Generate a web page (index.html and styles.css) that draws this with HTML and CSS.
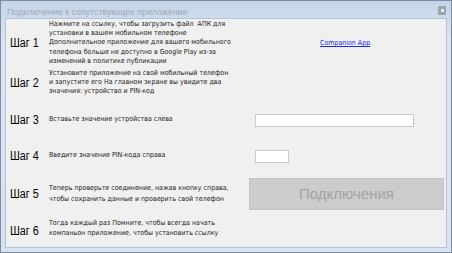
FILE: index.html
```html
<!DOCTYPE html>
<html>
<head>
  <meta charset="UTF-8">
  <title>Подключение к сопутствующее приложение</title>
  <link rel="stylesheet" href="styles.css">
</head>
<body>
  <div class="window">
    <div class="titlebar">
      <span class="title">Подключение к сопутствующее приложение</span>
      <span class="close"><span class="close-mark"></span></span>
    </div>
    <div class="content">
      <div class="step">Шаг 1</div>
      <div class="desc">Нажмите на ссылку, чтобы загрузить файл&nbsp; АПК для<br>установки в вашем мобильном телефоне<br>Дополнительное приложение для вашего мобильного<br>телефона больше не доступно в Google Play из-за<br>изменений в политике публикации</div>
      <div class="side"><a class="link" href="#">Companion App</a></div>

      <div class="step">Шаг 2</div>
      <div class="desc">Установите приложение на свой мобильный телефон<br>и запустите его На главном экране вы увидите два<br>значения: устройство и PIN-код</div>
      <div class="side"></div>

      <div class="step">Шаг 3</div>
      <div class="desc">Вставьте значение устройства слева</div>
      <div class="side"><input class="field field-wide" type="text"></div>

      <div class="step">Шаг 4</div>
      <div class="desc">Введите значение PIN-кода справа</div>
      <div class="side"><input class="field field-short" type="text"></div>

      <div class="step">Шаг 5</div>
      <div class="desc desc-loose">Теперь проверьте соединение, нажав кнопку справа,<br>чтобы сохранить данные и проверить свой телефон</div>
      <div class="side"><button class="connect" disabled>Подключения</button></div>

      <div class="step">Шаг 6</div>
      <div class="desc desc-loose desc-up">Тогда каждый раз Помните, чтобы всегда начать<br>компаньон приложение, чтобы установить ссылку</div>
      <div class="side"></div>
    </div>
  </div>
</body>
</html>
```

FILE: styles.css
```css
body {
  margin: 0;
  background: #ffffff;
  font-family: "Liberation Sans", Arial, sans-serif;
}
.window {
  width: 452px;
  height: 253px;
  box-sizing: border-box;
  border: 1px solid #7f8c99;
  background: linear-gradient(to bottom, #c4d5e9, #d9e5f2 40px, #d6e3f1);
  display: flex;
  flex-direction: column;
}
.titlebar {
  height: 17px;
  display: flex;
  align-items: center;
  justify-content: space-between;
  padding: 0 4px 0 6px;
}
.title {
  font-size: 8.8px;
  color: #9ba7b5;
  margin-top: 4px;
}
.close {
  width: 8px;
  height: 9px;
  background: #9ea5ad;
  display: flex;
  align-items: center;
  justify-content: center;
  margin-top: 2px;
  margin-right: 1px;
}
.close-mark {
  width: 3px;
  height: 3px;
  background: #e8ecef;
}
.content {
  margin: 0 4px 4px 4px;
  flex: 1;
  background: #f0f0f0;
  border: 1px solid #b5c4d4;
  display: grid;
  grid-template-columns: 39px 200px 195px;
  grid-template-rows: 48px 31px 44px 28px 47px 28px;
  padding: 0 0 0 4px;
  align-items: center;
}
.step {
  font-size: 12.5px;
  color: #000000;
  transform: scaleX(0.86);
  transform-origin: left center;
}
.desc {
  font-family: "DejaVu Sans Condensed", "DejaVu Sans", sans-serif;
  font-size: 7px;
  line-height: 9.3px;
  color: #1a1a1a;
  white-space: nowrap;
}
.desc-loose {
  line-height: 10.5px;
}
.desc-up {
  margin-bottom: 6px;
}
.side {
  display: flex;
  align-items: center;
}
.link {
  margin-left: 71px;
  font-family: "DejaVu Sans Condensed", "DejaVu Sans", sans-serif;
  font-size: 7px;
  color: #2222ff;
  text-decoration: underline;
}
.field {
  margin: 0 0 0 6px;
  padding: 0;
  height: 13px;
  box-sizing: border-box;
  border: 1px solid #cbcbcb;
  background: #ffffff;
}
.field-wide {
  width: 159px;
}
.field-short {
  width: 34px;
}
.connect {
  width: 196px;
  height: 32px;
  background: #cccccc;
  border: 1px solid #c2c2c2;
  color: #a3a3a3;
  font-family: "Liberation Sans", Arial, sans-serif;
  font-size: 15px;
  padding: 0;
}
```
